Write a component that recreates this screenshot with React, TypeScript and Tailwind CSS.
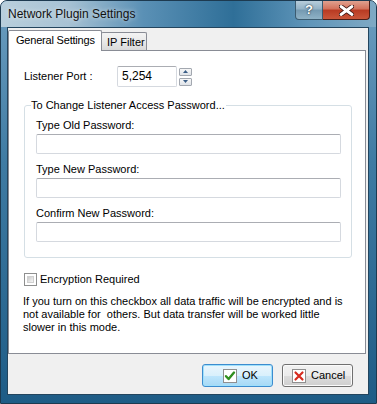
import React from "react";

const font = { fontFamily: '"Liberation Sans", Arial, sans-serif' };

function TextBox({ className = "" }: { className?: string }) {
  return (
    <div
      className={
        "h-[20px] rounded-[2px] border border-[#d5d9df] border-t-[#abadb3] bg-white " +
        className
      }
    />
  );
}

function OkIcon() {
  return (
    <svg width="14" height="14" viewBox="0 0 14 14">
      <rect x="0.5" y="0.5" width="13" height="13" fill="#fff" stroke="#8f8f8f" />
      <path d="M3 7.2 L5.6 10 L11 3.6" fill="none" stroke="#2f8f1f" strokeWidth="2.4" strokeLinejoin="round" strokeLinecap="round" />
    </svg>
  );
}

function CancelIcon() {
  return (
    <svg width="14" height="14" viewBox="0 0 14 14">
      <rect x="0.5" y="0.5" width="13" height="13" fill="#fff" stroke="#8f8f8f" />
      <path d="M3.5 3.5 L10.5 10.5 M10.5 3.5 L3.5 10.5" fill="none" stroke="#d62b1f" strokeWidth="2.2" strokeLinecap="round" />
    </svg>
  );
}

export default function App() {
  return (
    <div
      className="w-[377px] h-[404px] flex flex-col rounded-t-[7px] border border-[#1d3a50] bg-[linear-gradient(to_bottom,#6d9ec0,#3f7ba3_40%,#1e5c86)] overflow-hidden"
      style={font}
    >
      {/* Title bar */}
      <div className="h-[26px] flex items-start bg-[linear-gradient(to_right,#b9cfdc,#a7c2d4_18%,#5a90b5_38%,#2f6f98_62%,#5f95b9_82%,#7fa9c4)]">
        <div className="pl-[7px] pt-[6px] text-[12px] leading-[15px] text-[#111] [text-shadow:0_0_5px_rgba(255,255,255,0.8)]">
          Network Plugin Settings
        </div>
        <div className="ml-auto mr-[6px] flex">
          <div className="w-[28px] h-[19px] rounded-bl-[4px] border border-t-0 border-[#3b5b70] bg-[linear-gradient(to_bottom,#b7cddb,#93b2c6_45%,#7499b1_50%,#8fb2c6)] flex items-center justify-center text-[13px] font-bold text-white [text-shadow:0_0_2px_#233a4a,0_0_1px_#233a4a]">
            ?
          </div>
          <div className="w-[47px] h-[19px] rounded-br-[4px] border border-t-0 border-l-0 border-[#4a1e18] bg-[linear-gradient(to_bottom,#e0a18f,#d3705a_45%,#b83a22_50%,#c9563a)] flex items-center justify-center">
            <svg width="15" height="11" viewBox="0 0 15 11">
              <path d="M2 1.5 L13 9.5 M13 1.5 L2 9.5" stroke="#3a1410" strokeWidth="4.6" strokeLinecap="round" />
              <path d="M2 1.5 L13 9.5 M13 1.5 L2 9.5" stroke="#ffffff" strokeWidth="2.8" strokeLinecap="round" />
            </svg>
          </div>
        </div>
      </div>

      {/* Client area */}
      <div className="ml-[6px] mr-[7px] mb-[8px] flex-1 flex flex-col border border-[#23455e] bg-[#f0f0f0]">
        {/* Tabs */}
        <div className="mt-[2px] h-[20px] flex items-end">
          <div className="relative z-10 -mb-px h-[21px] w-[94px] border border-b-0 border-[#898c95] bg-white rounded-t-[2px] pl-[7px] pt-[3px] text-[11px] leading-[13px] tracking-[-0.2px] text-black">
            General Settings
          </div>
          <div className="h-[18px] w-[46px] -ml-px border border-b-0 border-[#898c95] rounded-t-[2px] bg-[linear-gradient(to_bottom,#f3f3f3,#e9e9e9_50%,#d9d9d9)] pl-[5px] pt-[3px] text-[11px] leading-[13px] text-black">
            IP Filter
          </div>
        </div>

        {/* Panel */}
        <div className="w-[358px] h-[304px] border border-[#898c95] bg-white px-[15px] text-[11px] leading-[13px] text-black">
          <div className="mt-[15px] flex items-center">
            <div className="w-[93px]">Listener Port :</div>
            <div className="w-[60px] h-[21px] rounded-[2px] border border-[#d5d9df] border-t-[#abadb3] bg-white pl-[4px] flex items-center text-[12px]">
              5,254
            </div>
            <div className="ml-[2px] flex flex-col gap-[2px]">
              <div className="w-[13px] h-[8px] border border-[#a3a8b0] rounded-[1px] bg-[linear-gradient(to_bottom,#f7f7f7,#dfe3e8)] flex items-center justify-center">
                <svg width="5" height="3" viewBox="0 0 5 3"><path d="M0 3 L2.5 0 L5 3 Z" fill="#3a5d86" /></svg>
              </div>
              <div className="w-[13px] h-[8px] border border-[#a3a8b0] rounded-[1px] bg-[linear-gradient(to_bottom,#f7f7f7,#dfe3e8)] flex items-center justify-center">
                <svg width="5" height="3" viewBox="0 0 5 3"><path d="M0 0 L2.5 3 L5 0 Z" fill="#3a5d86" /></svg>
              </div>
            </div>
          </div>

          <fieldset className="mt-[12px] w-[328px] rounded-[3px] border border-[#d5dfe5] pl-[11px] pr-[10px] pt-[6px] pb-[15px]">
            <legend className="-ml-[5px] pr-[1px] text-[11px] leading-[13px]">
              To Change Listener Access Password...
            </legend>
            <div className="h-[14px] leading-[14px]">Type Old Password:</div>
            <TextBox className="mt-[2px]" />
            <div className="mt-[8px] h-[14px] leading-[14px]">Type New Password:</div>
            <TextBox className="mt-[2px]" />
            <div className="mt-[8px] h-[14px] leading-[14px]">Confirm New Password:</div>
            <TextBox className="mt-[2px]" />
          </fieldset>

          <div className="mt-[15px] flex items-center">
            <div className="w-[13px] h-[13px] border border-[#8e8f8f] p-[2px] bg-white">
              <div className="w-full h-full bg-[linear-gradient(to_bottom_right,#cbcbcb,#f6f6f6)] border border-[#d0d0d0]" />
            </div>
            <div className="ml-[3px]">Encryption Required</div>
          </div>

          <div className="mt-[9px] -ml-px whitespace-pre leading-[13px]">
            {"If you turn on this checkbox all data traffic will be encrypted and is\nnot available for  others. But data transfer will be worked little\nslower in this mode."}
          </div>
        </div>

        {/* Buttons */}
        <div className="mt-[10px] flex justify-end gap-[9px] pr-[15px]">
          <button className="w-[71px] h-[23px] rounded-[3px] border border-[#3c8ccf] bg-[linear-gradient(to_bottom,#eaf6fd,#d9f0fc_50%,#bee6fd_50%,#a7d9f5)] flex items-center pl-[20px] text-[11px] text-black shadow-[inset_0_0_0_1px_#9fe0fb]">
            <OkIcon />
            <span className="ml-[5px]">OK</span>
          </button>
          <button className="w-[71px] h-[23px] rounded-[3px] border border-[#707070] bg-[linear-gradient(to_bottom,#f2f2f2,#ebebeb_50%,#dddddd_50%,#cfcfcf)] flex items-center pl-[9px] text-[11px] text-black shadow-[inset_0_0_0_1px_#fbfbfb]">
            <CancelIcon />
            <span className="ml-[5px]">Cancel</span>
          </button>
        </div>
      </div>
    </div>
  );
}
